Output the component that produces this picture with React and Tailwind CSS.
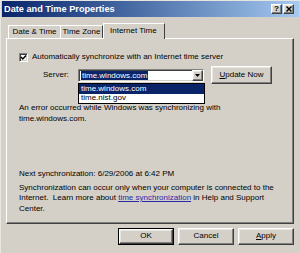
import React from 'react';

const raised = 'border border-t-white border-l-white border-r-[#404040] border-b-[#404040] shadow-[inset_-1px_-1px_#808080,inset_1px_1px_#e8e6e0]';
const sunken = 'border border-t-[#808080] border-l-[#808080] border-r-white border-b-white shadow-[inset_1px_1px_#404040,inset_-1px_-1px_#d4d0c8]';

const Key = ({ children }) => <span className="underline">{children}</span>;

const Button = ({ children, w, isDefault }) => (
  <div className={`${isDefault ? 'border border-black' : ''} h-[17px] ${w}`}>
    <div className={`${raised} h-full w-full flex items-center justify-center text-black`}>{children}</div>
  </div>
);

const App = () => {
  return (
    <div
      className="w-[300px] h-[253px] bg-[#d4d0c8] flex flex-col overflow-hidden text-[8px] leading-[10.5px] text-black border-t border-l border-t-[#e8e6e0] border-l-[#e8e6e0] whitespace-nowrap"
      style={{ fontFamily: '"Liberation Sans", Arial, sans-serif' }}
    >
      {/* Title bar */}
      <div className="h-[16px] mx-[1px] flex items-center justify-between pl-[2px] pr-[5px] bg-gradient-to-r from-[#0a246a] to-[#a6caf0]">
        <span className="text-white font-bold text-[9.2px]">Date and Time Properties</span>
        <div className="flex gap-[1px]">
          <div className={`${raised} w-[11px] h-[10px] bg-[#d4d0c8] flex items-center justify-center font-bold text-[8px] leading-none`}>?</div>
          <div className={`${raised} w-[11px] h-[10px] bg-[#d4d0c8] flex items-center justify-center`}>
            <svg width="6" height="6" viewBox="0 0 6 6">
              <path d="M0.5 0.5 L5.5 5.5 M5.5 0.5 L0.5 5.5" stroke="#000" strokeWidth="1.4" />
            </svg>
          </div>
        </div>
      </div>

      {/* Tabs */}
      <div className="flex items-end pl-[7px] mt-[5px] h-[16px] relative z-10">
        <div className="h-[13px] flex items-center justify-center border-t border-l border-t-white border-l-white w-[52px]">Date &amp; Time</div>
        <div className="h-[13px] flex items-center justify-center border-t border-l border-r border-t-white border-l-white border-r-[#404040] w-[43px]">Time Zone</div>
        <div className="h-[16px] pl-[6px] flex items-start pt-[2px] border-t border-l border-r border-t-white border-l-white border-r-[#404040] bg-[#d4d0c8] w-[62px] -mb-px relative">
          Internet Time
        </div>
      </div>

      {/* Panel */}
      <div className="ml-[5px] w-[288px] h-[186px] border border-t-white border-l-white border-r-[#404040] border-b-[#404040] shadow-[inset_-1px_-1px_#808080] flex flex-col relative">
        <div className="flex items-center mt-[13px] ml-[12px] h-[10px]">
          <div className={`${sunken} w-[9px] h-[9px] bg-white flex items-center justify-center`}>
            <svg width="7" height="7" viewBox="0 0 7 7">
              <path d="M1 3 L2.8 5 L6 1.5" stroke="#000" strokeWidth="1.5" fill="none" />
            </svg>
          </div>
          <span className="ml-[4px]">Automatically synchronize with an Internet time server</span>
        </div>

        <div className="flex items-center mt-[4px] h-[18px]">
          <span className="ml-[36px] w-[35px]">Server:</span>
          <div className={`${sunken} w-[126px] h-[13px] bg-white flex items-center`}>
            <div className="flex-1 pl-[2px] flex items-center">
              <span className="bg-[#0a246a] text-white px-[1px] leading-[9px]">time.windows.com</span>
            </div>
            <div className={`${raised} w-[11px] h-[11px] bg-[#d4d0c8] flex items-center justify-center`}>
              <svg width="5" height="3" viewBox="0 0 5 3">
                <path d="M0 0 H5 L2.5 3 Z" fill="#000" />
              </svg>
            </div>
          </div>
          <div className="ml-[7px]">
            <Button w="w-[61px] h-[18px]">
              <Key>U</Key>pdate Now
            </Button>
          </div>
        </div>

        {/* Drop-down list */}
        <div className="absolute left-[71px] top-[44px] w-[127px] h-[21px] bg-white border border-black flex flex-col z-20">
          <div className="h-[10px] bg-[#0a246a] text-white pl-[2px] flex items-center">time.windows.com</div>
          <div className="h-[9px] pl-[2px] flex items-center">time.nist.gov</div>
        </div>

        <div className="ml-[12px] mt-[19px] flex flex-col">
          <span>An error occurred while Windows was synchronizing with</span>
          <span>time.windows.com.</span>
        </div>

        <div className="ml-[12px] mt-[45px]">Next synchronization: 6/29/2006 at 6:42 PM</div>

        <div className="ml-[12px] mt-[3px] flex flex-col">
          <span>Synchronization can occur only when your computer is connected to the</span>
          <span>
            Internet.&nbsp; Learn more about <span className="text-[#2a2aa8] underline">time synchronization</span> in Help and Support
          </span>
          <span>Center.</span>
        </div>
      </div>

      {/* Bottom buttons */}
      <div className="flex justify-end gap-[4px] mt-[4px] pr-[6px]">
        <Button w="w-[56px]" isDefault>OK</Button>
        <Button w="w-[56px]">Cancel</Button>
        <Button w="w-[56px]">
          <Key>A</Key>pply
        </Button>
      </div>
    </div>
  );
};

export default App;
